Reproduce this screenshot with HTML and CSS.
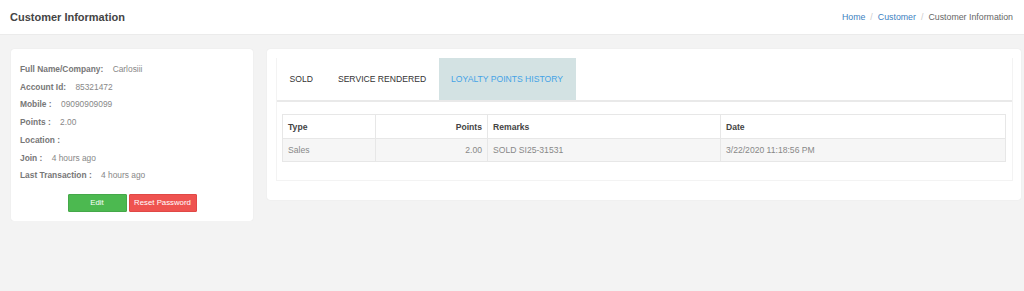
FILE: index.html
```html
<!DOCTYPE html>
<html lang="en">
<head>
    <meta charset="UTF-8">
    <title>Customer Information</title>
    <link rel="stylesheet" href="styles.css">
</head>
<body>
    <header class="page-header">
        <h1>Customer Information</h1>
        <ol class="breadcrumb">
            <li><a href="#">Home</a></li>
            <li><a href="#">Customer</a></li>
            <li class="current">Customer Information</li>
        </ol>
    </header>

    <main class="content">
        <section class="card profile">
            <div class="info-item"><b>Full Name/Company:</b> <span>Carlosiii</span></div>
            <div class="info-item"><b>Account Id:</b> <span>85321472</span></div>
            <div class="info-item"><b>Mobile :</b> <span>09090909099</span></div>
            <div class="info-item"><b>Points :</b> <span>2.00</span></div>
            <div class="info-item"><b>Location :</b> <span></span></div>
            <div class="info-item"><b>Join :</b> <span>4 hours ago</span></div>
            <div class="info-item"><b>Last Transaction :</b> <span>4 hours ago</span></div>
            <div class="actions">
                <button class="btn btn-edit">Edit</button>
                <button class="btn btn-reset">Reset Password</button>
            </div>
        </section>

        <section class="card history">
            <div class="tab-panel">
                <ul class="tabs">
                    <li>SOLD</li>
                    <li>SERVICE RENDERED</li>
                    <li class="active">LOYALTY POINTS HISTORY</li>
                </ul>
                <div class="tab-body">
                    <table>
                        <thead>
                            <tr>
                                <th class="col-type">Type</th>
                                <th class="col-points num">Points</th>
                                <th class="col-remarks">Remarks</th>
                                <th>Date</th>
                            </tr>
                        </thead>
                        <tbody>
                            <tr>
                                <td>Sales</td>
                                <td class="num">2.00</td>
                                <td>SOLD SI25-31531</td>
                                <td>3/22/2020 11:18:56 PM</td>
                            </tr>
                        </tbody>
                    </table>
                </div>
            </div>
        </section>
    </main>
</body>
</html>
```

FILE: styles.css
```css
body {
    margin: 0;
    background: #f3f3f3;
    font-family: 'Liberation Sans', Arial, sans-serif;
    color: #555;
}

/* top bar */
.page-header {
    display: flex;
    justify-content: space-between;
    align-items: center;
    height: 34px;
    padding: 0 11px 0 10px;
    background: #fff;
    border-bottom: 1px solid #ebebeb;
}

.page-header h1 {
    margin: 0;
    font-size: 11px;
    font-weight: bold;
    color: #444;
}

.breadcrumb {
    display: flex;
    margin: 0;
    padding: 0;
    list-style: none;
    font-size: 8.8px;
}

.breadcrumb li + li::before {
    content: "/";
    padding: 0 5px;
    color: #ccc;
}

.breadcrumb a {
    color: #3c7fbf;
    text-decoration: none;
}

.breadcrumb .current {
    color: #666;
}

.content {
    display: flex;
    align-items: flex-start;
    gap: 14px;
    padding: 14px 3px 0 11px;
}

.card {
    background: #fff;
    border-radius: 3px;
    box-shadow: 0 0 1px rgba(0, 0, 0, 0.12);
}

/* customer details */
.profile {
    width: 224px;
    flex-shrink: 0;
    padding: 12px 9px 9px;
}

.info-item {
    font-size: 8.4px;
    line-height: 17.7px;
    color: #888;
}

.info-item b {
    color: #777;
    margin-right: 7px;
}

.actions {
    display: flex;
    justify-content: center;
    gap: 2px;
    margin-top: 9px;
}

.btn {
    height: 18px;
    padding: 0;
    border: 1px solid transparent;
    border-radius: 1px;
    font-family: inherit;
    font-size: 7.8px;
    color: #fff;
    white-space: nowrap;
    cursor: pointer;
}

.btn-edit {
    width: 59px;
    background: #4cb950;
    border-color: #45a849;
}

.btn-reset {
    width: 68px;
    background: #ef5350;
    border-color: #e04946;
}

/* points history */
.history {
    flex: 1;
    padding: 9px 8px 19px 9px;
}

.tab-panel {
    border: 1px solid #f3f3f3;
    border-top: none;
    padding-bottom: 18px;
}

.tabs {
    display: flex;
    margin: 0;
    padding: 0;
    list-style: none;
    border-bottom: 2px solid #e9e9e9;
}

.tabs li {
    padding: 0 12.5px;
    line-height: 42px;
    font-size: 8.6px;
    color: #333;
}

.tabs li.active {
    background: #d3e2e3;
    color: #45a3e6;
}

.tab-body {
    padding: 12px 6px 0 5px;
}

table {
    width: 100%;
    border-collapse: collapse;
    font-size: 8.6px;
}

th,
td {
    border: 1px solid #e7e7e7;
    padding: 0 5px;
    text-align: left;
}

th {
    height: 23px;
    color: #444;
}

td {
    height: 22px;
    color: #888;
    background: #f6f6f6;
}

.num {
    text-align: right;
}

.col-type {
    width: 82px;
}

.col-points {
    width: 101px;
}

.col-remarks {
    width: 222px;
}
```
